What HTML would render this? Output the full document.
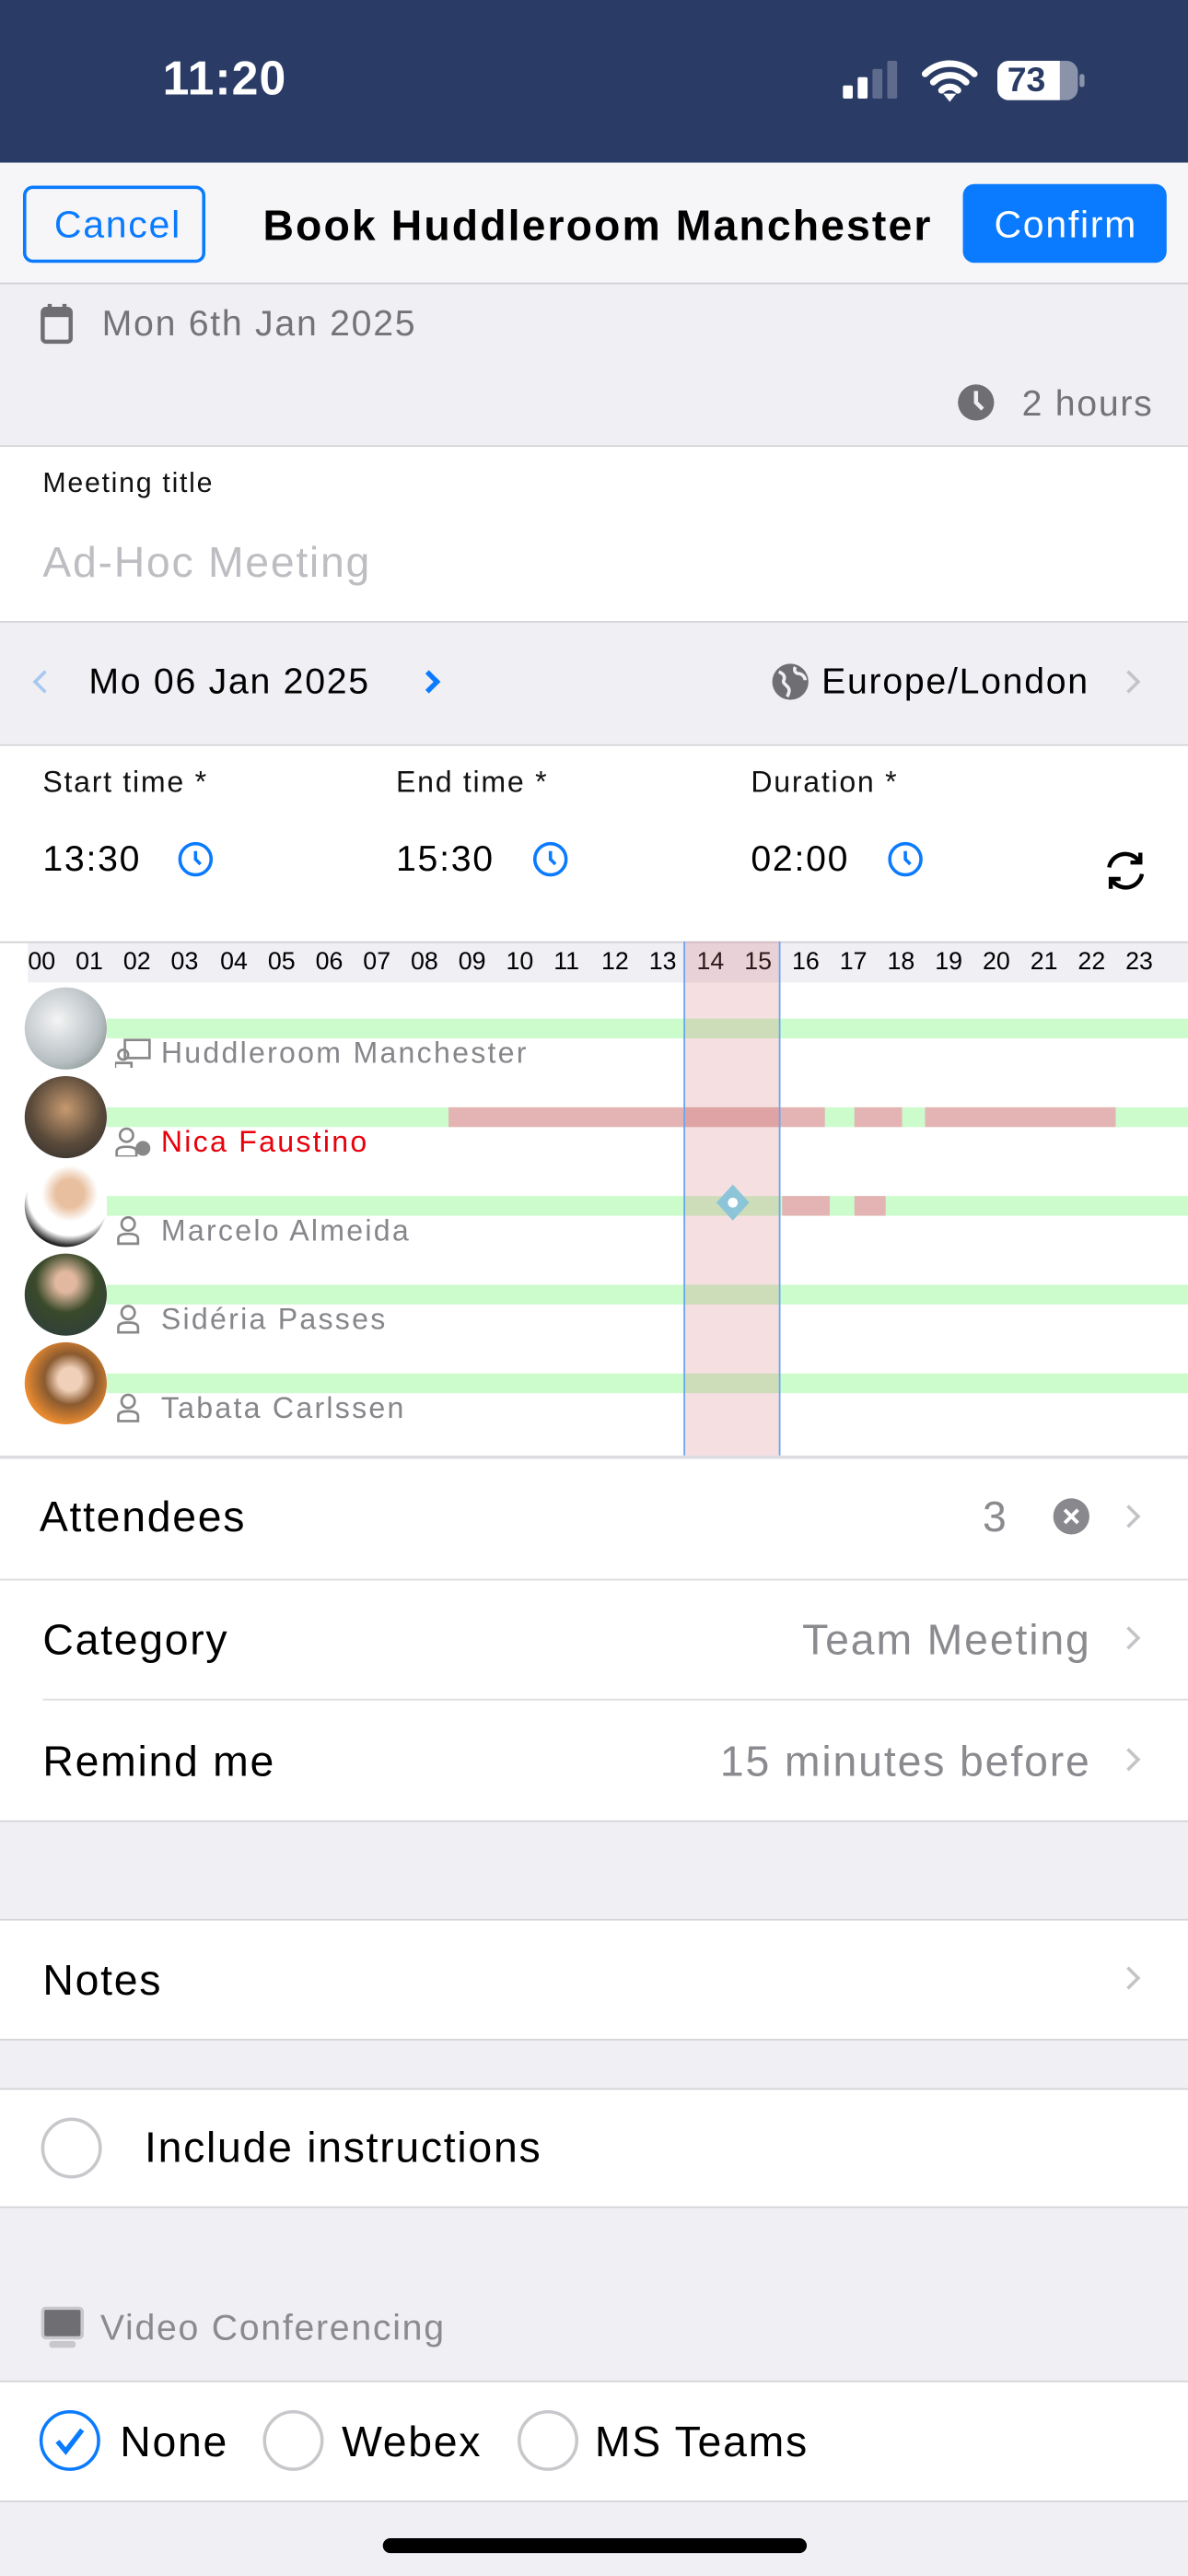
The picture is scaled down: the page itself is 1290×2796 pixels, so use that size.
<!DOCTYPE html>
<html><head><meta charset="utf-8"><style>
*{margin:0;padding:0;box-sizing:border-box}
html,body{width:1290px;height:2796px;overflow:hidden;background:#efeff4}
#w{position:absolute;left:0;top:0;width:723px;height:1568px;transform:scale(1.7842,1.7832);transform-origin:0 0;font-family:"Liberation Sans",sans-serif;background:#efeff4;letter-spacing:0.06em}
.a{position:absolute}
.t{position:absolute;line-height:1;transform:translateY(-50%);white-space:nowrap}
.wh{position:absolute;left:0;width:723px;background:#fff;border-top:1px solid #d4d4d8;border-bottom:1px solid #d4d4d8}
.hr{position:absolute;left:0;width:723px;height:1px;background:#dcdce0}
.chev{position:absolute;width:10px;height:10px;border-right:2px solid #c4c4c8;border-top:2px solid #c4c4c8;transform:rotate(45deg)}
.av{position:absolute;left:15px;width:50px;height:50px;border-radius:50%}
.g{position:absolute;left:65px;width:658px;height:12px;background:#ccfbcc}
.r{position:absolute;height:12px;background:#e4b3b3}
.nm{position:absolute;left:98px;font-size:18px;color:#86868b;line-height:1;transform:translateY(-50%);letter-spacing:0.07em;white-space:nowrap}
.rad{position:absolute;width:37px;height:37px;border-radius:50%;border:2px solid #c8c8cc}
.hrs{letter-spacing:0}
</style></head><body><div id="w">
<div class="a" style="left:0;top:0;width:723px;height:99px;background:#2a3c66"></div>
<div class="t" style="left:99px;top:49px;font-size:29px;color:#fff;font-weight:bold;letter-spacing:0.02em">11:20</div>
<div class="a" style="left:513px;top:52px;width:6px;height:8px;background:#fff;border-radius:1px"></div>
<div class="a" style="left:522px;top:47px;width:6px;height:13px;background:#fff;border-radius:1px"></div>
<div class="a" style="left:531px;top:42px;width:6px;height:18px;background:#5e6b8c;border-radius:1px"></div>
<div class="a" style="left:540px;top:37px;width:6px;height:23px;background:#5e6b8c;border-radius:1px"></div>
<svg class="a" style="left:561px;top:36px" width="34" height="26" viewBox="0 0 34 26"><path d="M2 9a21 21 0 0 1 30 0M7 14a14 14 0 0 1 20 0M12 19a7 7 0 0 1 10 0" stroke="#fff" stroke-width="4" fill="none" stroke-linecap="round"/><path d="M13 21l4 5 4-5z" fill="#fff"/></svg>
<div class="a" style="left:607px;top:37px;width:49px;height:24px;background:#8b93aa;border-radius:7px;overflow:hidden"><div style="width:38px;height:24px;background:#fff"></div></div>
<div class="a" style="left:657px;top:45px;width:3px;height:8px;background:#8b93aa;border-radius:2px"></div>
<div class="t" style="left:613px;top:49px;font-size:21px;font-weight:bold;color:#2a3c66;letter-spacing:0">73</div>

<div class="a" style="left:0;top:99px;width:723px;height:74px;background:#f6f6f8;border-bottom:1px solid #d0d0d4"></div>
<div class="a" style="left:14px;top:113px;width:111px;height:47px;border:2px solid #0a7aff;border-radius:6px"></div>
<div class="t" style="left:33px;top:137px;font-size:23px;color:#0a7aff">Cancel</div>
<div class="t" style="left:160px;top:137px;font-size:26px;font-weight:bold;color:#000;letter-spacing:0.045em">Book Huddleroom Manchester</div>
<div class="a" style="left:586px;top:112px;width:124px;height:48px;background:#0a7aff;border-radius:7px"></div>
<div class="t" style="left:605px;top:137px;font-size:23px;color:#fff">Confirm</div>

<svg class="a" style="left:24px;top:184px" width="22" height="26" viewBox="0 0 22 26"><rect x="2" y="4" width="17" height="20" rx="2" fill="none" stroke="#6e6e73" stroke-width="2.5"/><rect x="2" y="4" width="17" height="5" fill="#6e6e73"/><rect x="5" y="1" width="2.5" height="5" fill="#6e6e73"/><rect x="14" y="1" width="2.5" height="5" fill="#6e6e73"/></svg>
<div class="t" style="left:62px;top:197px;font-size:22px;color:#737378">Mon 6th Jan 2025</div>
<svg class="a" style="left:582px;top:233px" width="24" height="24" viewBox="0 0 24 24"><circle cx="12" cy="12" r="11" fill="#6e6e73"/><path d="M12 5v7l4 4" stroke="#efeff4" stroke-width="2.5" fill="none"/></svg>
<div class="t" style="right:21px;top:246px;font-size:22px;color:#737378">2 hours</div>

<div class="wh" style="top:271px;height:108px"></div>
<div class="t" style="left:26px;top:294px;font-size:17px;color:#111">Meeting title</div>
<div class="t" style="left:26px;top:342px;font-size:26px;color:#bdbdc2">Ad-Hoc Meeting</div>

<div class="chev" style="left:22px;top:410px;transform:rotate(225deg);border-color:#a8c8f0"></div>
<div class="t" style="left:54px;top:415px;font-size:22px;color:#000">Mo 06 Jan 2025</div>
<div class="chev" style="left:256px;top:410px;border-color:#0a7aff;border-width:3px 3px 0 0"></div>
<svg class="a" style="left:469px;top:403px" width="24" height="24" viewBox="0 0 24 24"><circle cx="12" cy="12" r="11" fill="#6e6e73"/><path d="M5 6c3 1 4 3 3 5s2 3 3 5-1 5-1 5M15 3c-1 2 0 4 2 4s4 2 4 4" stroke="#efeff4" stroke-width="2" fill="none"/></svg>
<div class="t" style="left:500px;top:415px;font-size:22px;color:#000">Europe/London</div>
<div class="chev" style="left:682px;top:410px"></div>

<div class="wh" style="top:453px;height:121px;border-bottom:none"></div>
<div class="t" style="left:26px;top:476px;font-size:18px;color:#111">Start time *</div>
<div class="t" style="left:241px;top:476px;font-size:18px;color:#111">End time *</div>
<div class="t" style="left:457px;top:476px;font-size:18px;color:#111">Duration *</div>
<div class="t" style="left:26px;top:523px;font-size:22px;color:#000">13:30</div>
<div class="t" style="left:241px;top:523px;font-size:22px;color:#000">15:30</div>
<div class="t" style="left:457px;top:523px;font-size:22px;color:#000">02:00</div>
<svg class="a" style="left:108px;top:512px" width="22" height="22" viewBox="0 0 22 22"><circle cx="11" cy="11" r="9.5" fill="none" stroke="#0a7aff" stroke-width="2"/><path d="M11 6v5l3 3" stroke="#0a7aff" stroke-width="2" fill="none"/></svg>
<svg class="a" style="left:324px;top:512px" width="22" height="22" viewBox="0 0 22 22"><circle cx="11" cy="11" r="9.5" fill="none" stroke="#0a7aff" stroke-width="2"/><path d="M11 6v5l3 3" stroke="#0a7aff" stroke-width="2" fill="none"/></svg>
<svg class="a" style="left:540px;top:512px" width="22" height="22" viewBox="0 0 22 22"><circle cx="11" cy="11" r="9.5" fill="none" stroke="#0a7aff" stroke-width="2"/><path d="M11 6v5l3 3" stroke="#0a7aff" stroke-width="2" fill="none"/></svg>
<svg class="a" style="left:671px;top:516px" width="28" height="28" viewBox="0 0 28 28"><path d="M4 12a10 10 0 0 1 18-4M24 16a10 10 0 0 1-18 4" stroke="#000" stroke-width="2.5" fill="none"/><path d="M23 3v6h-6M5 25v-6h6" stroke="#000" stroke-width="2.5" fill="none"/></svg>

<div class="a" style="left:0;top:573px;width:723px;height:314px;background:#fff;border-top:1px solid #d0d0d4"></div>
<div class="a" style="left:17px;top:574px;width:706px;height:24px;background:#efeff4"></div>
<div class="a hrs" style="left:0;top:576px;width:723px;font-size:15px;color:#000;line-height:20px">
<span class="a" style="left:17px">00</span><span class="a" style="left:46px">01</span><span class="a" style="left:75px">02</span><span class="a" style="left:104px">03</span><span class="a" style="left:134px">04</span><span class="a" style="left:163px">05</span><span class="a" style="left:192px">06</span><span class="a" style="left:221px">07</span><span class="a" style="left:250px">08</span><span class="a" style="left:279px">09</span><span class="a" style="left:308px">10</span><span class="a" style="left:337px">11</span><span class="a" style="left:366px">12</span><span class="a" style="left:395px">13</span><span class="a" style="left:424px">14</span><span class="a" style="left:453px">15</span><span class="a" style="left:482px">16</span><span class="a" style="left:511px">17</span><span class="a" style="left:540px">18</span><span class="a" style="left:569px">19</span><span class="a" style="left:598px">20</span><span class="a" style="left:627px">21</span><span class="a" style="left:656px">22</span><span class="a" style="left:685px">23</span></div>

<div class="g" style="top:620px"></div><div class="g" style="top:674px"></div><div class="g" style="top:728px"></div><div class="g" style="top:782px"></div><div class="g" style="top:836px"></div>
<div class="r" style="left:273px;top:674px;width:229px"></div>
<div class="r" style="left:520px;top:674px;width:29px"></div>
<div class="r" style="left:563px;top:674px;width:116px"></div>
<div class="r" style="left:476px;top:728px;width:29px"></div>
<div class="r" style="left:520px;top:728px;width:19px"></div>
<div class="a" style="left:416px;top:573px;width:59px;height:313px;background:rgba(210,110,120,0.22);border-left:1.5px solid #6aa6f0;border-right:1.5px solid #6aa6f0"></div>
<svg class="a" style="left:434px;top:720px" width="24" height="24" viewBox="0 0 24 24"><path d="M12 1l10 11-10 11L2 12z" fill="#8cc4d8"/><circle cx="12" cy="12" r="3" fill="#fff"/></svg>

<div class="av" style="top:601px;background:radial-gradient(circle at 40% 40%,#f4f4f4,#b8c0c4 60%,#6a7a70)"></div>
<div class="av" style="top:655px;background:radial-gradient(circle at 50% 40%,#c79a70,#5a4a3a 55%,#2a2a2a)"></div>
<div class="av" style="top:709px;background:radial-gradient(circle at 55% 35%,#e8c0a0 20%,#fff 40%,#fff 60%,#222 75%)"></div>
<div class="av" style="top:763px;background:radial-gradient(circle at 50% 35%,#e2b9a0 15%,#3a4a2a 45%,#2a3a40)"></div>
<div class="av" style="top:817px;background:radial-gradient(circle at 55% 45%,#f0d0b8 18%,#8a5a30 40%,#e88a30 70%)"></div>

<svg class="a" style="left:70px;top:632px" width="22" height="18" viewBox="0 0 22 18"><rect x="6" y="1" width="15" height="11" fill="none" stroke="#888" stroke-width="1.5"/><circle cx="5" cy="10" r="3" fill="none" stroke="#888" stroke-width="1.5"/><path d="M0 18v-3h10v3" fill="none" stroke="#888" stroke-width="1.5"/></svg>
<div class="nm" style="top:641px">Huddleroom Manchester</div>
<svg class="a" style="left:70px;top:686px" width="22" height="18" viewBox="0 0 22 18"><circle cx="7" cy="5" r="4" fill="none" stroke="#888" stroke-width="1.5"/><path d="M1 18v-3q0-3 6-3t6 3v3z" fill="none" stroke="#888" stroke-width="1.5"/><circle cx="17" cy="13" r="4.5" fill="#888"/></svg>
<div class="nm" style="top:695px;color:#e8000b">Nica Faustino</div>
<svg class="a" style="left:70px;top:740px" width="16" height="18" viewBox="0 0 16 18"><circle cx="8" cy="5" r="4" fill="none" stroke="#888" stroke-width="1.5"/><path d="M2 17v-3q0-3 6-3t6 3v3z" fill="none" stroke="#888" stroke-width="1.5"/></svg>
<div class="nm" style="top:749px">Marcelo Almeida</div>
<svg class="a" style="left:70px;top:794px" width="16" height="18" viewBox="0 0 16 18"><circle cx="8" cy="5" r="4" fill="none" stroke="#888" stroke-width="1.5"/><path d="M2 17v-3q0-3 6-3t6 3v3z" fill="none" stroke="#888" stroke-width="1.5"/></svg>
<div class="nm" style="top:803px">Sidéria Passes</div>
<svg class="a" style="left:70px;top:848px" width="16" height="18" viewBox="0 0 16 18"><circle cx="8" cy="5" r="4" fill="none" stroke="#888" stroke-width="1.5"/><path d="M2 17v-3q0-3 6-3t6 3v3z" fill="none" stroke="#888" stroke-width="1.5"/></svg>
<div class="nm" style="top:857px">Tabata Carlssen</div>

<div class="wh" style="top:886px;height:223px"></div>
<div class="a" style="left:0;top:886px;width:723px;height:2px;background:#dcdce0"></div>
<div class="hr" style="top:961px"></div>
<div class="hr" style="top:1034px;left:26px"></div>
<div class="t" style="left:24px;top:923px;font-size:26px;color:#000">Attendees</div>
<div class="t" style="left:598px;top:923px;font-size:26px;color:#8a8a8f">3</div>
<svg class="a" style="left:640px;top:911px" width="24" height="24" viewBox="0 0 24 24"><circle cx="12" cy="12" r="11" fill="#88888d"/><path d="M8 8l8 8M16 8l-8 8" stroke="#fff" stroke-width="2.2"/></svg>
<div class="chev" style="left:682px;top:918px"></div>
<div class="t" style="left:26px;top:998px;font-size:26px;color:#000">Category</div>
<div class="t" style="right:59px;top:998px;font-size:26px;color:#8a8a8f;letter-spacing:0.04em">Team Meeting</div>
<div class="chev" style="left:682px;top:992px"></div>
<div class="t" style="left:26px;top:1072px;font-size:26px;color:#000">Remind me</div>
<div class="t" style="right:59px;top:1072px;font-size:26px;color:#8a8a8f;letter-spacing:0.04em">15 minutes before</div>
<div class="chev" style="left:682px;top:1066px"></div>

<div class="wh" style="top:1168px;height:74px"></div>
<div class="t" style="left:26px;top:1205px;font-size:26px;color:#000">Notes</div>
<div class="chev" style="left:682px;top:1199px"></div>

<div class="wh" style="top:1271px;height:73px"></div>
<div class="rad" style="left:25px;top:1289px"></div>
<div class="t" style="left:88px;top:1307px;font-size:26px;color:#000">Include instructions</div>

<svg class="a" style="left:25px;top:1404px" width="26" height="26" viewBox="0 0 26 26"><rect x="1" y="1" width="24" height="18" rx="2" fill="#6e6e73" stroke="#c8c8cc" stroke-width="2"/><rect x="5" y="21" width="16" height="4" rx="1.5" fill="#c8c8cc"/></svg>
<div class="t" style="left:61px;top:1417px;font-size:22px;color:#8a8a8f">Video Conferencing</div>

<div class="wh" style="top:1449px;height:74px"></div>
<div class="rad" style="left:24px;top:1467px;border-color:#0a7aff"></div>
<svg class="a" style="left:31px;top:1474px" width="24" height="24" viewBox="0 0 24 24"><path d="M4 12l5 6L19 5" stroke="#0a7aff" stroke-width="3" fill="none"/></svg>
<div class="t" style="left:73px;top:1486px;font-size:26px;color:#000">None</div>
<div class="rad" style="left:160px;top:1467px"></div>
<div class="t" style="left:208px;top:1486px;font-size:26px;color:#000">Webex</div>
<div class="rad" style="left:315px;top:1467px"></div>
<div class="t" style="left:362px;top:1486px;font-size:26px;color:#000">MS Teams</div>

<div class="a" style="left:233px;top:1545px;width:258px;height:9px;background:#000;border-radius:5px"></div>
</div></body></html>
